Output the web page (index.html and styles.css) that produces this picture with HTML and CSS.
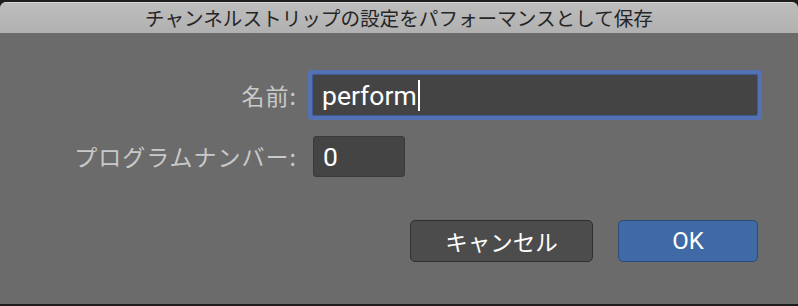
FILE: index.html
```html
<!DOCTYPE html>
<html lang="ja">
<head>
<meta charset="utf-8">
<link rel="stylesheet" href="styles.css">
</head>
<body>
<div class="window">
  <div class="titlebar">チャンネルストリップの設定をパフォーマンスとして保存</div>
  <div class="content">
    <div class="form">
      <div class="label">名前:</div>
      <div class="field field-name"><span class="value">perform</span><span class="caret"></span></div>
      <div class="label">プログラムナンバー:</div>
      <div class="field field-number"><span class="value">0</span></div>
    </div>
    <div class="buttons">
      <div class="btn btn-cancel">キャンセル</div>
      <div class="btn btn-ok">OK</div>
    </div>
  </div>
</div>
</body>
</html>
```

FILE: styles.css
```css
html, body {
  margin: 0;
  padding: 0;
  background: #1d1d1d;
}
body {
  width: 798px;
  height: 306px;
  overflow: hidden;
}
.window {
  margin-top: 2px;
  height: 302px;
  display: flex;
  flex-direction: column;
  background: #6b6b6b;
  border-radius: 6px 6px 0 0;
  overflow: hidden;
}
.titlebar {
  height: 31px;
  flex: none;
  background: linear-gradient(#bdbdbd, #b1b1b1);
  border-top: 1px solid #d6d6d6;
  box-sizing: border-box;
  color: #262626;
  font-family: "Noto Sans CJK JP", sans-serif;
  font-size: 19.6px;
  line-height: 29px;
  text-align: center;
}
.content {
  flex: 1;
  display: flex;
  flex-direction: column;
  padding-top: 42px;
}
.form {
  display: grid;
  grid-template-columns: 296px 1fr;
  column-gap: 17px;
  row-gap: 21px;
  padding-right: 41px;
  align-items: center;
}
.label {
  justify-self: end;
  color: #c9c9c9;
  font-family: "Noto Sans CJK JP", sans-serif;
  font-size: 23px;
  letter-spacing: 1px;
  line-height: 1;
  margin-right: -1px;
}
.field {
  box-sizing: border-box;
  height: 40px;
  background: #444444;
  display: flex;
  align-items: center;
  padding-left: 9px;
  color: #ffffff;
  font-family: Roboto, "Noto Sans", sans-serif;
  font-size: 26.5px;
}
.field-name {
  border-radius: 1px;
  box-shadow: 0 0 0 1px #3e5a93, 0 0 0 5px #5371b3;
}
.field-number {
  width: 92px;
  height: 41px;
  border: 1px solid #3a3a3a;
  border-radius: 3px;
}
.caret {
  width: 2px;
  height: 31px;
  background: #ffffff;
  margin-left: 1px;
}
.buttons {
  display: flex;
  justify-content: flex-end;
  gap: 25px;
  padding-right: 40px;
  margin-top: 43px;
}
.btn {
  box-sizing: border-box;
  height: 42px;
  border-radius: 5px;
  display: flex;
  align-items: center;
  justify-content: center;
  color: #ffffff;
  font-size: 22.5px;
}
.btn-cancel {
  width: 183px;
  background: #4c4c4c;
  border: 1px solid #303030;
  font-family: "Noto Sans CJK JP", sans-serif;
}
.btn-ok {
  width: 140px;
  background: #3f6aa5;
  border: 1px solid #2b4d7e;
  font-family: Roboto, "Noto Sans", sans-serif;
  font-size: 24px;
}
```
